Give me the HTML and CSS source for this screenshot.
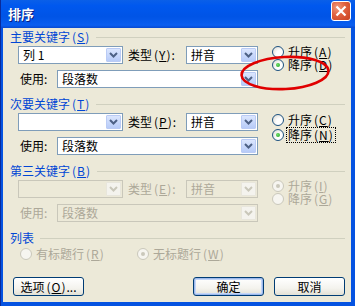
FILE: index.html
```html
<!DOCTYPE html>
<html lang="zh">
<head>
  <meta charset="UTF-8">
  <title>排序</title>
  <link rel="stylesheet" href="styles.css">
</head>
<body>
  <div class="window">
    <div class="titlebar">
      <span class="title">排序</span>
      <span class="close-btn">
        <svg width="12" height="12" viewBox="0 0 12 12"><path d="M1.5 1.5 L10.5 10.5 M10.5 1.5 L1.5 10.5" stroke="#fff" stroke-width="2.2" fill="none"/></svg>
      </span>
    </div>

    <div class="body">
      <!-- 主要关键字 -->
      <section class="group">
        <div class="group-head"><span class="group-label">主要关键字<span class="mn">(<u>S</u>)</span></span><span class="rule"></span></div>
        <div class="group-main">
          <div class="fields">
            <div class="row">
              <div class="combo key"><span class="val">列 1</span><span class="arrow"><svg width="9" height="6" viewBox="0 0 9 6"><path d="M1 1 L4.5 4.5 L8 1" /></svg></span></div>
              <span class="lbl type-lbl">类型<span class="mn">(<u>Y</u>)</span>:</span>
              <div class="combo type"><span class="val">拼音</span><span class="arrow"><svg width="9" height="6" viewBox="0 0 9 6"><path d="M1 1 L4.5 4.5 L8 1" /></svg></span></div>
            </div>
            <div class="row">
              <span class="lbl use-lbl">使用:</span>
              <div class="combo use"><span class="val">段落数</span><span class="arrow"><svg width="9" height="6" viewBox="0 0 9 6"><path d="M1 1 L4.5 4.5 L8 1" /></svg></span></div>
            </div>
          </div>
          <div class="radios">
            <div class="radio"><span class="dot"></span><span class="txt">升序<span class="mn">(<u>A</u>)</span></span></div>
            <div class="radio checked"><span class="dot"></span><span class="txt">降序<span class="mn">(<u>D</u>)</span></span></div>
          </div>
        </div>
      </section>

      <!-- 次要关键字 -->
      <section class="group">
        <div class="group-head"><span class="group-label">次要关键字<span class="mn">(<u>T</u>)</span></span><span class="rule"></span></div>
        <div class="group-main">
          <div class="fields">
            <div class="row">
              <div class="combo key"><span class="val"></span><span class="arrow"><svg width="9" height="6" viewBox="0 0 9 6"><path d="M1 1 L4.5 4.5 L8 1" /></svg></span></div>
              <span class="lbl type-lbl">类型<span class="mn">(<u>P</u>)</span>:</span>
              <div class="combo type"><span class="val">拼音</span><span class="arrow"><svg width="9" height="6" viewBox="0 0 9 6"><path d="M1 1 L4.5 4.5 L8 1" /></svg></span></div>
            </div>
            <div class="row">
              <span class="lbl use-lbl">使用:</span>
              <div class="combo use"><span class="val">段落数</span><span class="arrow"><svg width="9" height="6" viewBox="0 0 9 6"><path d="M1 1 L4.5 4.5 L8 1" /></svg></span></div>
            </div>
          </div>
          <div class="radios wide">
            <div class="radio"><span class="dot"></span><span class="txt">升序<span class="mn">(<u>C</u>)</span></span></div>
            <div class="radio checked"><span class="dot"></span><span class="txt focus">降序<span class="mn">(<u>N</u>)</span></span></div>
          </div>
        </div>
      </section>

      <!-- 第三关键字 (disabled) -->
      <section class="group off">
        <div class="group-head"><span class="group-label">第三关键字<span class="mn">(<u>B</u>)</span></span><span class="rule"></span></div>
        <div class="group-main">
          <div class="fields">
            <div class="row">
              <div class="combo key"><span class="val"></span><span class="arrow"><svg width="9" height="6" viewBox="0 0 9 6"><path d="M1 1 L4.5 4.5 L8 1" /></svg></span></div>
              <span class="lbl type-lbl">类型<span class="mn">(<u>E</u>)</span>:</span>
              <div class="combo type"><span class="val">拼音</span><span class="arrow"><svg width="9" height="6" viewBox="0 0 9 6"><path d="M1 1 L4.5 4.5 L8 1" /></svg></span></div>
            </div>
            <div class="row">
              <span class="lbl use-lbl">使用:</span>
              <div class="combo use"><span class="val">段落数</span><span class="arrow"><svg width="9" height="6" viewBox="0 0 9 6"><path d="M1 1 L4.5 4.5 L8 1" /></svg></span></div>
            </div>
          </div>
          <div class="radios">
            <div class="radio checked"><span class="dot"></span><span class="txt">升序<span class="mn">(<u>I</u>)</span></span></div>
            <div class="radio"><span class="dot"></span><span class="txt">降序<span class="mn">(<u>G</u>)</span></span></div>
          </div>
        </div>
      </section>

      <!-- 列表 -->
      <section class="group list">
        <div class="group-head"><span class="group-label">列表</span><span class="rule"></span></div>
        <div class="list-radios off">
          <div class="radio has-head"><span class="dot"></span><span class="txt">有标题行<span class="mn">(<u>R</u>)</span></span></div>
          <div class="radio checked"><span class="dot"></span><span class="txt">无标题行<span class="mn">(<u>W</u>)</span></span></div>
        </div>
      </section>

      <div class="buttons">
        <button class="btn">选项<span class="mn">(<u>O</u>)</span>...</button>
        <div class="btn-group">
          <button class="btn default">确定</button>
          <button class="btn">取消</button>
        </div>
      </div>
    </div>

    <!-- hand-drawn red mark -->
    <svg class="mark" width="92" height="38" viewBox="0 0 92 38">
      <ellipse cx="46" cy="19" rx="43.5" ry="16" fill="none" stroke="#e00000" stroke-width="2.6" transform="rotate(-3 46 19)"/>
    </svg>
  </div>
</body>
</html>
```

FILE: styles.css
```css
* {
  box-sizing: border-box;
}

body {
  margin: 0;
  font-family: "Noto Sans CJK SC", "Noto Sans", sans-serif;
  font-size: 12px;
  color: #000;
  background: #fff;
}

.window {
  position: relative;
  width: 355px;
  height: 306px;
  display: flex;
  flex-direction: column;
  background: #0553e1;
  border-left: 1px solid #0a2a9a;
}

/* Title bar */
.titlebar {
  height: 28px;
  display: flex;
  align-items: flex-start;
  justify-content: space-between;
  padding: 0 4px 0 7px;
  background: linear-gradient(to bottom, #0a5fe8 0%, #0058ee 20%, #0054e6 60%, #0a5ef0 90%, #0849d0 100%);
}

.title {
  margin-top: 6px;
  font-size: 13px;
  line-height: 15px;
  font-weight: bold;
  color: #fff;
  text-shadow: 1px 1px 0 #0a1e80;
}

.close-btn {
  margin-top: 1px;
  width: 20px;
  height: 20px;
  display: flex;
  align-items: center;
  justify-content: center;
  border: 1px solid #fff;
  border-radius: 3px;
  background: radial-gradient(circle at 30% 30%, #f09a7c 0%, #e0603e 45%, #c8401f 100%);
}

/* Dialog body */
.body {
  flex: 1;
  margin: 0 4px 4px 2px;
  padding: 3px 0 6px;
  display: flex;
  flex-direction: column;
  background: #ece9d8;
}

/* mnemonic "(X)" parts, half-width like the system font */
.mn {
  margin-left: 2px;
  letter-spacing: 1px;
}

.group {
  margin-bottom: 10px;
}

.group-head {
  display: flex;
  align-items: center;
  height: 12px;
  padding: 0 6px 0 7px;
}

.group-label {
  color: #0046d5;
  line-height: 12px;
  white-space: nowrap;
}

.rule {
  flex: 1;
  height: 1px;
  margin-left: 6px;
  background: #d0d0bf;
}

.group-main {
  display: flex;
  padding-left: 15px;
  margin-top: 3px;
}

.fields {
  display: flex;
  flex-direction: column;
  gap: 6px;
}

.row {
  display: flex;
  align-items: center;
  height: 18px;
}

.lbl {
  line-height: 12px;
  white-space: nowrap;
}

.type-lbl {
  width: 58px;
  margin-left: 5px;
}

.use-lbl {
  width: 39px;
  padding-left: 2px;
}

/* Combo boxes */
.combo {
  height: 18px;
  display: flex;
  align-items: stretch;
  border: 1px solid #7f9db9;
  background: #fff;
  padding: 1px;
}

.combo .val {
  flex: 1;
  padding-left: 3px;
  line-height: 14px;
  white-space: nowrap;
}

.combo .arrow {
  width: 15px;
  display: flex;
  align-items: center;
  justify-content: center;
  border: 1px solid #bacbf5;
  border-radius: 1px;
  background: linear-gradient(to bottom, #dbe6fe, #b7cbf8);
}

.combo .arrow path {
  fill: none;
  stroke: #4d6185;
  stroke-width: 2;
}

.key { width: 105px; }
.type { width: 72px; }
.use { width: 201px; }

/* Radio buttons */
.radios {
  display: flex;
  flex-direction: column;
  gap: 1px;
  margin-left: 14px;
}

.radios.wide {
  gap: 3px;
  margin-top: 1px;
}

.radio {
  display: flex;
  align-items: center;
  gap: 4px;
  height: 12px;
  white-space: nowrap;
}

.radio .txt {
  line-height: 12px;
}

.dot {
  position: relative;
  width: 12px;
  height: 12px;
  border: 1px solid #1c5180;
  border-radius: 50%;
  background: radial-gradient(circle at 70% 70%, #ffffff 35%, #d6d5cc 100%);
}

.checked .dot::after {
  content: "";
  position: absolute;
  left: 3px;
  top: 3px;
  width: 4px;
  height: 4px;
  border-radius: 50%;
  background: radial-gradient(circle at 40% 40%, #6fe06a, #1e9a1e);
}

.focus {
  outline: 1px dotted #000;
  outline-offset: 1px;
}

/* Disabled parts */
.off .lbl,
.off .radio .txt,
.off .combo .val {
  color: #aca899;
}

.off .combo {
  border-color: #c9c7ba;
  background: #ece9d8;
}

.off .combo .arrow {
  border-color: #e8e6dc;
  background: #f4f3ee;
}

.off .combo .arrow path {
  stroke: #c9c7ba;
}

.off .dot {
  border-color: #cac8bb;
  background: #f6f5f0;
}

.off .checked .dot::after {
  background: #cac8bb;
}

/* 列表 */
.list {
  margin-bottom: 0;
}

.list-radios {
  display: flex;
  margin-top: 4px;
  padding-left: 17px;
}

.has-head {
  width: 117px;
}

/* Buttons */
.buttons {
  margin-top: auto;
  display: flex;
  justify-content: space-between;
  padding: 0 6px 0 10px;
}

.btn-group {
  display: flex;
  gap: 10px;
}

.btn {
  width: 71px;
  height: 19px;
  padding: 0;
  font-family: inherit;
  font-size: 12px;
  line-height: 12px;
  color: #000;
  border: 1px solid #003c74;
  border-radius: 3px;
  background: linear-gradient(to bottom, #ffffff 0%, #f4f3ee 60%, #e3e1d5 100%);
}

.btn.default {
  box-shadow: inset 0 0 0 1px #9db9eb, inset 0 0 0 2px #c4d6f8;
}

.mark {
  position: absolute;
  left: 238px;
  top: 54px;
}
```
